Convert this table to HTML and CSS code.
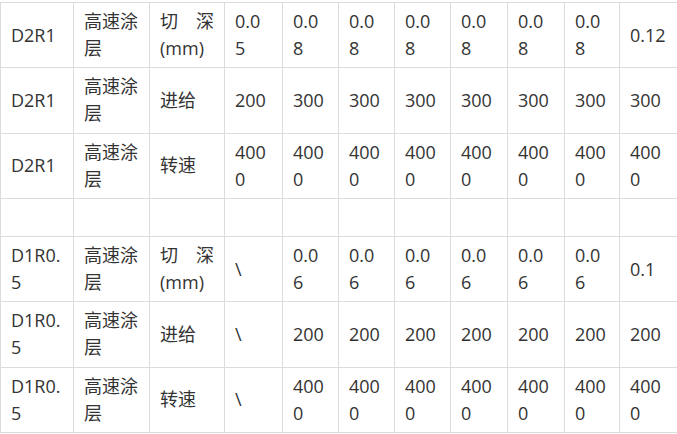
FILE: index.html
```html
<!DOCTYPE html>
<html lang="zh-CN">
<head>
<meta charset="utf-8">
<title>参数表</title>
<link rel="stylesheet" href="styles.css">
</head>
<body>
<table class="params">
  <colgroup>
    <col class="c-tool"><col class="c-coat"><col class="c-param">
    <col class="c-d1"><col class="c-d2"><col class="c-d3"><col class="c-d4">
    <col class="c-d5"><col class="c-d6"><col class="c-d7"><col class="c-d8">
  </colgroup>
  <tbody>
    <tr>
      <td>D2R1</td><td>高速涂层</td><td class="just">切 深(mm)</td>
      <td>0.05</td><td>0.08</td><td>0.08</td><td>0.08</td><td>0.08</td><td>0.08</td><td>0.08</td><td>0.12</td>
    </tr>
    <tr>
      <td>D2R1</td><td>高速涂层</td><td>进给</td>
      <td>200</td><td>300</td><td>300</td><td>300</td><td>300</td><td>300</td><td>300</td><td>300</td>
    </tr>
    <tr>
      <td>D2R1</td><td>高速涂层</td><td>转速</td>
      <td>4000</td><td>4000</td><td>4000</td><td>4000</td><td>4000</td><td>4000</td><td>4000</td><td>4000</td>
    </tr>
    <tr class="blank">
      <td>&nbsp;</td><td></td><td></td><td></td><td></td><td></td><td></td><td></td><td></td><td></td><td></td>
    </tr>
    <tr>
      <td>D1R0.5</td><td>高速涂层</td><td class="just">切 深(mm)</td>
      <td>\</td><td>0.06</td><td>0.06</td><td>0.06</td><td>0.06</td><td>0.06</td><td>0.06</td><td>0.1</td>
    </tr>
    <tr>
      <td>D1R0.5</td><td>高速涂层</td><td>进给</td>
      <td>\</td><td>200</td><td>200</td><td>200</td><td>200</td><td>200</td><td>200</td><td>200</td>
    </tr>
    <tr>
      <td>D1R0.5</td><td>高速涂层</td><td>转速</td>
      <td>\</td><td>4000</td><td>4000</td><td>4000</td><td>4000</td><td>4000</td><td>4000</td><td>4000</td>
    </tr>
  </tbody>
</table>
</body>
</html>
```

FILE: styles.css
```css
html {
  overflow: hidden;
  background: #fff;
}

body {
  margin: 0;
  padding-top: 2px;
  font-family: "Open Sans", "Noto Sans CJK SC", sans-serif;
  font-size: 18px;
  color: #333;
}

.params {
  table-layout: fixed;
  border-collapse: collapse;
  width: 680px;
}

.c-tool  { width: 73px; }
.c-coat  { width: 76px; }
.c-param { width: 75px; }
.c-d1 { width: 58px; }
.c-d2 { width: 56px; }
.c-d3 { width: 56px; }
.c-d4 { width: 56px; }
.c-d5 { width: 57px; }
.c-d6 { width: 57px; }
.c-d7 { width: 55px; }
.c-d8 { width: 61px; }

.params td {
  border: 1px solid #dcdcdc;
  padding: 5.14px 10px;
  line-height: 27px;
  vertical-align: middle;
  text-align: left;
  word-break: break-all;
}

.params td:nth-child(n+4) {
  padding-right: 12px;
}

.params td.just {
  text-align: justify;
}
```
